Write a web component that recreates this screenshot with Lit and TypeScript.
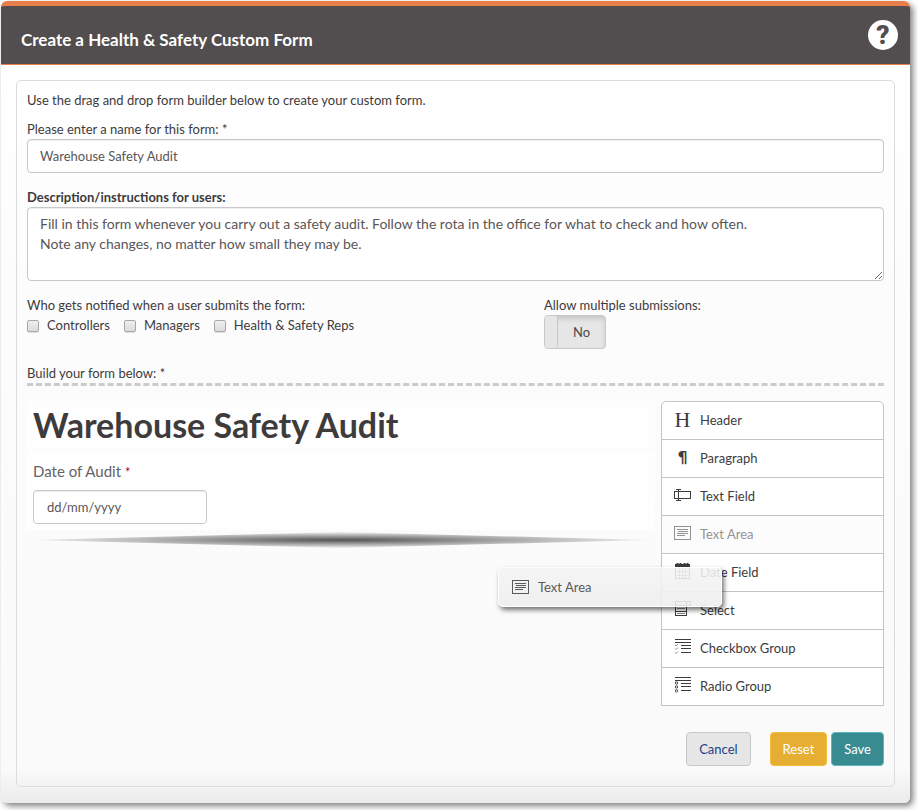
import { LitElement, html, css, svg, nothing, TemplateResult } from "lit";
import { customElement, state } from "lit/decorators.js";
import { classMap } from "lit/directives/class-map.js";

interface FieldType {
  id: string;
  label: string;
}

const FIELD_TYPES: FieldType[] = [
  { id: "header", label: "Header" },
  { id: "paragraph", label: "Paragraph" },
  { id: "text", label: "Text Field" },
  { id: "textarea", label: "Text Area" },
  { id: "date", label: "Date Field" },
  { id: "select", label: "Select" },
  { id: "checkbox", label: "Checkbox Group" },
  { id: "radio", label: "Radio Group" },
];

const GROUPS = ["Controllers", "Managers", "Health & Safety Reps"];

const SHAPES: Record<string, TemplateResult> = {
  text: svg`
    <rect x="0.5" y="4.5" width="16" height="7"/>
    <path d="M4.5 2v12M2 2.5h2M5 2.5h2M2 13.5h2M5 13.5h2"/>`,
  textarea: svg`
    <rect x="0.5" y="1.5" width="16" height="13"/>
    <path d="M3 4.5h11M4 6.5h10M3 8.5h11M3 10.5h8" />`,
  date: svg`
    <path d="M1 2.5h15" stroke-width="3"/>
    <path d="M3.5 0v3M6.5 0v3M10.5 0v3M13.5 0v3" stroke-width="2"/>
    <rect x="1.5" y="2.5" width="14" height="13"/>
    <path d="M5.5 5v10M8.5 5v10M11.5 5v10M2 8.5h13M2 12.5h13" stroke-opacity=".6"/>`,
  select: svg`
    <rect x="1.5" y="0.5" width="15" height="4"/>
    <path d="M12.5 1v4"/>
    <rect x="1.5" y="4.5" width="11" height="10"/>
    <path d="M2 5.5h10M2 10.5h10" />
    <path d="M3 7.5h8M3 12.5h8" stroke-opacity=".6"/>`,
  checkbox: svg`
    <path d="M1 0.5h16M1 3.5h16M7 6.5h10M7 9.5h10M7 13.5h10"/>
    <path d="M1 6l1 1l2-2M1 9.500l1 1l2-2M1 13.5l1 1l2-2" stroke-opacity=".55"/>`,
  radio: svg`
    <path d="M1 0.5h16M1 3.5h16M7 6.500h10M7 9.5h10M7 13.5h10"/>
    <circle cx="2.5" cy="6" r="1.2"/><circle cx="2.5" cy="9.9" r="1.2"/><circle cx="2.5" cy="13.8" r="1.2"/>`,
};

@customElement("field-icon")
export class FieldIcon extends LitElement {
  static properties = { name: {} };
  declare name: string;

  static styles = css`
    :host {
      display: flex;
      justify-content: center;
      align-items: center;
      flex: none;
      width: 17px;
      height: 17px;
    }
    svg {
      width: 17px;
      height: 17px;
      overflow: visible;
      fill: none;
      stroke: currentColor;
    }
    .glyph {
      font: 22px/17px "Liberation Serif", serif;
    }
    .pilcrow {
      font: bold 16px/17px "DejaVu Sans", sans-serif;
    }
  `;

  render() {
    if (this.name === "header") return html`<span class="glyph" aria-hidden="true">H</span>`;
    if (this.name === "paragraph") return html`<span class="pilcrow" aria-hidden="true">¶</span>`;
    return html`<svg viewBox="0 0 17 17" aria-hidden="true">${SHAPES[this.name] ?? nothing}</svg>`;
  }
}

@customElement("app-root")
export class AppRoot extends LitElement {
  @state() private multiple = false;
  @state() private dragging = "textarea";

  static styles = css`
    :host {
      display: block;
      padding: 1px 8px 7px 1px;
      background: #fff;
      color: #3e3b3c;
      font: 13px/20px Lato, "Noto Sans", sans-serif;
    }
    * {
      box-sizing: border-box;
    }
    .card {
      border-radius: 6px;
      background: linear-gradient(#fff 64px, #fcfcfc 300px, #fafafa calc(100% - 34px), #ebebeb);
      box-shadow: 3px 3px 6px rgba(0, 0, 0, 0.5);
    }
    .bar {
      display: flex;
      align-items: center;
      justify-content: space-between;
      height: 64px;
      padding: 0 12px 0 20px;
      border-top: 5px solid #e87e48;
      border-bottom: 1px solid #e87e48;
      border-radius: 6px 6px 0 0;
      background: #524d4e;
      color: #fff;
    }
    .title {
      margin: 10px 0 0;
      font-size: 17px;
      line-height: 24px;
      font-weight: 700;
    }
    .help {
      width: 30px;
      height: 30px;
      padding: 0;
      border: 0;
      border-radius: 50%;
      background: #fff;
      color: #524d4e;
      font: 900 26px/30px Roboto, sans-serif;
    }
    .body {
      padding: 15px 15px 16px;
    }
    form {
      padding: 9px 10px 20px;
      border: 1px solid #dcdcdc;
      border-radius: 5px;
    }
    p {
      margin: 0;
    }
    .field {
      display: flex;
      flex-direction: column;
    }
    .name {
      margin-top: 9px;
    }
    .description {
      margin-top: 14px;
    }
    .strong {
      font-weight: 700;
    }
    .box {
      display: block;
      width: 100%;
      height: 34px;
      padding: 6px 12px;
      border: 1px solid #c8c8c8;
      border-radius: 4px;
      background: #fff;
      box-shadow: inset 0 1px 1px rgba(0, 0, 0, 0.075);
      color: #5a5657;
      font: inherit;
    }
    .box::placeholder {
      color: #5a5657;
      opacity: 1;
    }
    .area {
      height: 74px;
      font-size: 14px;
    }
    .options {
      display: grid;
      grid-template-columns: 517fr 340fr;
      margin-top: 14px;
    }
    .checks {
      display: flex;
      gap: 14px;
    }
    .check {
      display: flex;
      align-items: center;
      gap: 8px;
    }
    .check input {
      appearance: none;
      width: 12px;
      height: 12px;
      margin: 2px 0 0;
      border: 1px solid #a8a8a8;
      border-radius: 2px;
      background: linear-gradient(#eee, #dcdcdc);
      box-shadow: 0 1px 1px rgba(0, 0, 0, 0.12);
    }
    .check input:checked {
      background: #388d92;
    }
    fieldset {
      min-width: 0;
      margin: 0;
      padding: 0;
      border: 0;
    }
    legend {
      padding: 0;
    }
    .toggle {
      display: flex;
      width: 62px;
      height: 34px;
      padding: 0;
      border: 1px solid #c8c8c8;
      border-radius: 4px;
      background: #e6e6e6;
      box-shadow: inset 0 3px 5px rgba(0, 0, 0, 0.13);
      color: #4a4748;
      font: 13px/32px Lato, sans-serif;
    }
    .knob {
      width: 13px;
      height: 32px;
      border-right: 1px solid #c8c8c8;
      border-radius: 3px;
      background: #e6e6e6;
    }
    .on {
      flex-direction: row-reverse;
    }
    .state {
      flex: 1;
    }
    .build {
      margin-top: 14px;
      border-bottom: 3px dashed #ccc;
    }
    .builder {
      position: relative;
      display: flex;
      align-items: flex-start;
      gap: 6px;
      margin-top: 15px;
    }
    .stage {
      flex: 1;
      min-width: 0;
    }
    .block {
      margin-bottom: 2px;
      padding: 4px 6px;
      background: #fefefe;
    }
    .block h1 {
      margin: 0;
      font-size: 34px;
      line-height: 40px;
      font-weight: 700;
    }
    .date {
      display: flex;
      flex-direction: column;
      align-items: flex-start;
      gap: 8px;
      padding: 10px 6px 6px;
    }
    .date label {
      color: #666263;
      font-size: 15px;
    }
    .required {
      color: #c2003a;
      font-size: 13px;
    }
    .date .box {
      width: 174px;
      padding: 6px 13px;
    }
    .drop {
      height: 16px;
      background: radial-gradient(ellipse at center, #545454 0%, transparent 75%);
      clip-path: polygon(1% 50%, 50% 0, 99% 50%, 50% 100%);
    }
    .palette {
      flex: 0 0 223px;
      margin: 0;
      padding: 0;
      list-style: none;
    }
    .type {
      display: flex;
      align-items: center;
      gap: 9px;
      height: 39px;
      padding: 0 12px 2px;
      border: 1px solid #c4c4c4;
      background: #fff;
      cursor: move;
    }
    .type + .type {
      margin-top: -1px;
    }
    .type:first-child {
      border-radius: 5px 5px 0 0;
    }
    .lifted {
      background: #fcfcfc;
    }
    .lifted > * {
      opacity: 0.55;
    }
    .ghost {
      position: absolute;
      top: 166px;
      right: 162px;
      display: flex;
      align-items: center;
      gap: 9px;
      width: 224px;
      height: 40px;
      padding: 0 13px;
      border: 1px solid #fff;
      border-radius: 5px;
      background: linear-gradient(rgba(244, 244, 244, 0.88), rgba(238, 238, 238, 0.9));
      box-shadow: 2px 3px 5px rgba(0, 0, 0, 0.55);
      color: #5c595a;
    }
    .actions {
      display: flex;
      justify-content: flex-end;
      gap: 4px;
      margin-top: 26px;
    }
    .btn {
      height: 34px;
      padding: 0 12px;
      border: 1px solid;
      border-radius: 4px;
      color: #fff;
      font: 13px/20px Lato, sans-serif;
    }
    .cancel {
      margin-right: 15px;
      border-color: #c8c8c8;
      background: #e6e6e6;
      color: #24428a;
    }
    .reset {
      border-color: #f3bc3c;
      background: #e6ae33;
    }
    .save {
      border-color: #62b5ba;
      background: #388b91;
    }
  `;

  private renderType = (t: FieldType) => html`
    <li
      class=${classMap({ type: true, lifted: t.id === this.dragging })}
      draggable="true"
      @dragstart=${() => (this.dragging = t.id)}
    >
      <field-icon name=${t.id}></field-icon><span>${t.label}</span>
    </li>
  `;

  render() {
    const held = FIELD_TYPES.find((t) => t.id === this.dragging);
    return html`
      <main class="card">
        <header class="bar">
          <h2 class="title">Create a Health &amp; Safety Custom Form</h2>
          <button class="help" type="button" aria-label="Help">?</button>
        </header>
        <div class="body">
          <form @submit=${(e: Event) => e.preventDefault()}>
            <p>Use the drag and drop form builder below to create your custom form.</p>
            <div class="field name">
              <label for="name">Please enter a name for this form: *</label>
              <input id="name" class="box" type="text" value="Warehouse Safety Audit" />
            </div>
            <div class="field description">
              <label class="strong" for="description">Description/instructions for users:</label>
              <textarea
                id="description"
                class="box area"
                .value=${"Fill in this form whenever you carry out a safety audit. Follow the rota in the office for what to check and how often.\nNote any changes, no matter how small they may be."}
              ></textarea>
            </div>
            <div class="options">
              <fieldset>
                <legend>Who gets notified when a user submits the form:</legend>
                <div class="checks">
                  ${GROUPS.map((g) => html`<label class="check"><input type="checkbox" />${g}</label>`)}
                </div>
              </fieldset>
              <div>
                <label for="multiple">Allow multiple submissions:</label>
                <button
                  id="multiple"
                  class=${classMap({ toggle: true, on: this.multiple })}
                  type="button"
                  role="switch"
                  aria-checked=${this.multiple}
                  @click=${() => (this.multiple = !this.multiple)}
                >
                  <span class="knob"></span><span class="state">${this.multiple ? "Yes" : "No"}</span>
                </button>
              </div>
            </div>
            <p class="build">Build your form below: *</p>
            <div class="builder">
              <section class="stage">
                <div class="block"><h1>Warehouse Safety Audit</h1></div>
                <div class="block date">
                  <label for="date">Date of Audit <span class="required">*</span></label>
                  <input id="date" class="box" type="text" placeholder="dd/mm/yyyy" />
                </div>
                <div class="drop"></div>
              </section>
              <ul class="palette">
                ${FIELD_TYPES.map(this.renderType)}
              </ul>
              ${held
                ? html`<div class="ghost"><field-icon name=${held.id}></field-icon><span>${held.label}</span></div>`
                : nothing}
            </div>
            <div class="actions">
              <button class="btn cancel" type="button">Cancel</button>
              <button class="btn reset" type="reset">Reset</button>
              <button class="btn save" type="submit">Save</button>
            </div>
          </form>
        </div>
      </main>
    `;
  }
}
